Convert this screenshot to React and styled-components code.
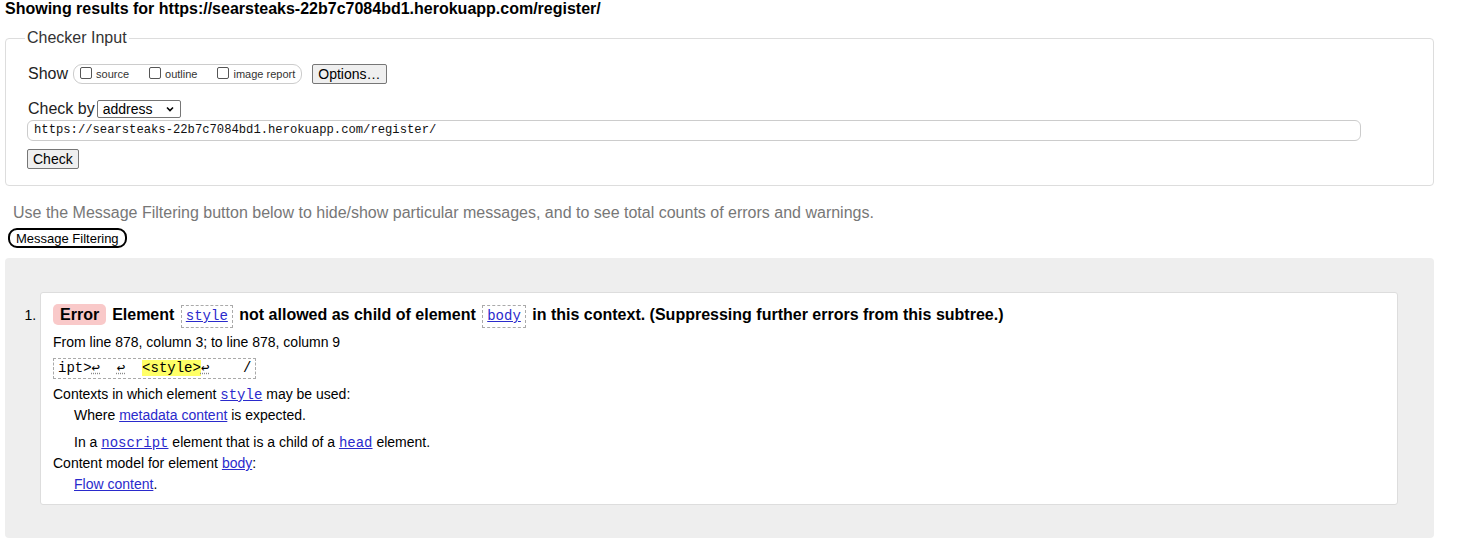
import React from 'react'
import styled, { createGlobalStyle } from 'styled-components'

const GlobalStyle = createGlobalStyle`
    body {
        margin: 0;
        background: #fff;
        color: #000;
        font-family: "Liberation Sans", Arial, sans-serif;
    }
`

const Page = styled.div`
    width: 1429px;
    padding: 0 0 9px 5px;
`

const Heading = styled.h2`
    margin: 0;
    font-size: 16px;
    line-height: 17px;
    font-weight: bold;
`

const Fieldset = styled.fieldset`
    margin: 12px 0 0;
    padding: 6px 22px 16px;
    border: 1px solid #ddd;
    border-radius: 4px;
`

const Legend = styled.legend`
    margin-left: -3px;
    padding: 0 2px;
    font-size: 16px;
    color: #333;
`

const Row = styled.div`
    display: flex;
    align-items: center;
    margin-top: ${p => p.top || 0}px;
    font-size: 16px;
    color: #222;
`

const Group = styled.span`
    display: inline-flex;
    align-items: center;
    gap: 20px;
    height: 18px;
    padding: 0 6px;
    margin-left: 5px;
    border: 1px solid #ccc;
    border-radius: 9px;
    font-size: 11px;
    color: #333;
`

const CheckLabel = styled.label`
    display: inline-flex;
    align-items: center;
    gap: 4px;
`

const Box = styled.span`
    display: inline-block;
    width: 10px;
    height: 10px;
    border: 1px solid #555;
    border-radius: 2px;
    margin-top: -3px;
`

const FormButton = styled.button`
    font-family: "Liberation Sans", Arial, sans-serif;
    font-size: 14px;
    height: 20px;
    padding: 0 5px;
    margin-left: ${p => p.left || 0}px;
    background: #efefef;
    border: 1px solid #767676;
    border-radius: 2px;
    color: #000;
`

const Select = styled.span`
    display: inline-flex;
    align-items: center;
    justify-content: space-between;
    width: 72px;
    height: 16px;
    padding: 0 5px;
    margin-left: 2px;
    border: 1px solid #767676;
    border-radius: 2px;
    font-size: 14px;
    color: #000;
`

const UrlInput = styled.div`
    width: 1320px;
    height: 19px;
    margin: 2px 0 0 -1px;
    padding: 0 6px;
    border: 1px solid #ccc;
    border-radius: 6px;
    font-family: "Liberation Mono", "DejaVu Sans Mono", monospace;
    font-size: 12.2px;
    line-height: 19px;
    color: #111;
`

const Hint = styled.p`
    margin: 17px 0 0 8px;
    font-size: 16px;
    line-height: 19px;
    color: #777;
`

const FilterButton = styled.button`
    display: block;
    margin: 6px 0 0 3px;
    height: 20px;
    padding: 0 6px;
    font-family: "Liberation Sans", Arial, sans-serif;
    font-size: 13px;
    background: #fff;
    border: 2px solid #000;
    border-radius: 9px;
    color: #000;
`

const Results = styled.div`
    margin-top: 10px;
    padding: 34px 36px 33px 0;
    background: #eee;
    border-radius: 4px;
`

const List = styled.ol`
    margin: 0;
    padding-left: 35px;
    font-size: 14px;
`

const Item = styled.li`
    padding: 10px 12px 9px;
    background: #fff;
    border: 1px solid #ddd;
    border-radius: 3px;
`

const Title = styled.p`
    margin: 0;
    font-size: 16px;
    font-weight: bold;
    line-height: 23px;
`

const Badge = styled.span`
    display: inline-block;
    padding: 0 7px;
    margin-right: 6px;
    background: #f9c9c9;
    border-radius: 5px;
    line-height: 21px;
`

const CodeLink = styled.a`
    display: inline-block;
    padding: 0 4px;
    margin: 0 2px;
    border: 1px dashed #aaa;
    font-family: "Liberation Mono", "DejaVu Sans Mono", monospace;
    font-size: 14px;
    font-weight: normal;
    line-height: 21px;
    color: #2a2acc;
`

const Location = styled.p`
    margin: 4px 0 0;
    line-height: 20px;
`

const Extract = styled.p`
    display: inline-block;
    margin: 6px 0 0;
    padding: 0 4px;
    border: 1px dashed #aaa;
    font-family: "Liberation Mono", "DejaVu Sans Mono", monospace;
    font-size: 14px;
    line-height: 19px;
    white-space: pre;
`

const Mark = styled.mark`
    background: #ff6;
    color: #000;
`

const Ret = styled.span`
    text-decoration: underline dotted #888;
`

const Terms = styled.dl`
    margin: 5px 0 0;
    line-height: 21px;
`

const Term = styled.dt``

const Def = styled.dd`
    margin: 0 0 0 21px;
`

const Para = styled.p`
    margin: ${p => p.top || 0}px 0 0;
`

const Link = styled.a`
    color: #2a2acc;
    line-height: 1;
    font-family: ${p => (p.mono ? '"Liberation Mono", "DejaVu Sans Mono", monospace' : 'inherit')};
`

const url = 'https://searsteaks-22b7c7084bd1.herokuapp.com/register/'

function App() {
    return (
        <Page>
            <GlobalStyle />
            <Heading>Showing results for {url}</Heading>

            <Fieldset>
                <Legend>Checker Input</Legend>
                <Row top={11}>
                    Show
                    <Group>
                        <CheckLabel><Box />source</CheckLabel>
                        <CheckLabel><Box />outline</CheckLabel>
                        <CheckLabel><Box />image report</CheckLabel>
                    </Group>
                    <FormButton left={10}>Options…</FormButton>
                </Row>
                <Row top={16}>
                    Check by
                    <Select>
                        address
                        <svg width="10" height="10" viewBox="0 0 10 10">
                            <path d="M2 3.5 L5 6.5 L8 3.5" stroke="#000" strokeWidth="1.6" fill="none" />
                        </svg>
                    </Select>
                </Row>
                <UrlInput>{url}</UrlInput>
                <Row top={8}>
                    <FormButton left={-1}>Check</FormButton>
                </Row>
            </Fieldset>

            <Hint>Use the Message Filtering button below to hide/show particular messages, and to see total counts of errors and warnings.</Hint>
            <FilterButton>Message Filtering</FilterButton>

            <Results>
                <List>
                    <Item>
                        <Title>
                            <Badge>Error</Badge>
                            Element <CodeLink href="#">style</CodeLink> not allowed as child of element{' '}
                            <CodeLink href="#">body</CodeLink> in this context. (Suppressing further errors from this subtree.)
                        </Title>
                        <Location>From line 878, column 3; to line 878, column 9</Location>
                        <Extract>
                            ipt&gt;<Ret>↩</Ret>  <Ret>↩</Ret>  <Mark>&lt;style&gt;</Mark><Ret>↩</Ret>    /
                        </Extract>
                        <Terms>
                            <Term>
                                Contexts in which element <Link mono href="#">style</Link> may be used:
                            </Term>
                            <Def>
                                <Para>Where <Link href="#">metadata content</Link> is expected.</Para>
                                <Para top={6}>
                                    In a <Link mono href="#">noscript</Link> element that is a child of a{' '}
                                    <Link mono href="#">head</Link> element.
                                </Para>
                            </Def>
                            <Term>
                                Content model for element <Link href="#">body</Link>:
                            </Term>
                            <Def>
                                <Link href="#">Flow content</Link>.
                            </Def>
                        </Terms>
                    </Item>
                </List>
            </Results>
        </Page>
    )
}

export default App
